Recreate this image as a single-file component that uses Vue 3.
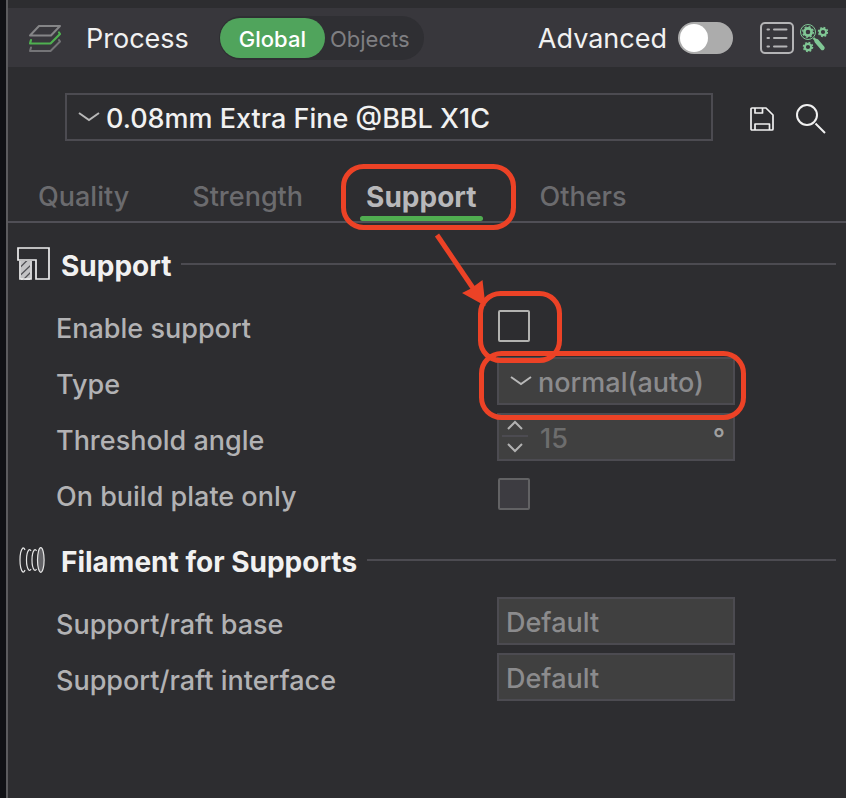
<script setup>
import { ref } from 'vue'

const scope = ref('Global')
const advanced = ref(false)
const tabs = ['Quality', 'Strength', 'Support', 'Others']
const activeTab = ref('Support')
const preset = ref('0.08mm Extra Fine @BBL X1C')
const enableSupport = ref(false)
const supportType = ref('normal(auto)')
const angle = ref('15')
const plateOnly = ref(false)
const filaments = [
  { id: 'raft-base', label: 'Support/raft base' },
  { id: 'raft-interface', label: 'Support/raft interface' }
]
</script>

<template>
  <div class="window">
    <main class="panel">
      <header class="header">
        <svg class="layers" width="34" height="30" viewBox="0 0 34 30" fill="none" stroke-width="2" stroke-linejoin="round" stroke-linecap="round">
          <path d="M11 3H32L23 12.500H2Z" stroke="#858587" />
          <path d="M3 17L2 20.500H22.500L32 11L31 9.500" stroke="#4fb050" stroke-width="2.200" />
          <path d="M3 24.500L2 28H22.500L32 18.500L31 17" stroke="#747477" />
        </svg>
        <h1 class="title">Process</h1>
        <div class="scope">
          <button
            v-for="s in ['Global', 'Objects']"
            :key="s"
            type="button"
            class="scope-btn"
            :class="{ on: scope === s }"
            @click="scope = s"
          >{{ s }}</button>
        </div>
        <label class="advanced" for="advanced">Advanced</label>
        <input id="advanced" v-model="advanced" class="switch" type="checkbox" />
        <button type="button" class="icon-btn list-btn" aria-label="Parameter list">
          <svg width="34" height="32" viewBox="0 0 34 32" fill="none" stroke="#b4b4b6" stroke-linecap="round">
            <rect x="1" y="1" width="32" height="30" rx="4" stroke-width="2" />
            <path d="M7.500 7.500H9M14 7.500H26.500M7.500 16H9M14 16H26.500M7.500 24.500H9M14 24.500H26.500" stroke-width="2" />
          </svg>
        </button>
        <button type="button" class="icon-btn" aria-label="Compare presets">
          <svg width="28" height="30" viewBox="0 0 28 30" fill="none" stroke="#80c795">
            <circle cx="8" cy="9" r="7.500" stroke-width="1" />
            <circle cx="8" cy="9" r="3.600" stroke-width="2.600" />
            <circle cx="8" cy="9" r="5.300" stroke-width="1.400" stroke-dasharray="2 2.160" />
            <path d="M13.500 15L16 17.500" stroke-width="2.400" />
            <path d="M16.500 18L22.500 25" stroke-width="4.400" stroke-linecap="round" />
            <circle cx="23" cy="9" r="3.200" stroke-width="2.200" />
            <circle cx="23" cy="9" r="4.600" stroke-width="1.400" stroke-dasharray="1.800 1.813" />
            <circle cx="8" cy="24" r="3.200" stroke-width="2.200" />
            <circle cx="8" cy="24" r="4.600" stroke-width="1.400" stroke-dasharray="1.800 1.813" />
          </svg>
        </button>
      </header>

      <div class="preset-row">
        <div class="field preset">
          <svg class="chevron" width="22" height="10" viewBox="0 0 22 10"><path d="M1 1L11 8L21 1" /></svg>
          <select v-model="preset" class="select" aria-label="Process preset">
            <option>0.08mm Extra Fine @BBL X1C</option>
          </select>
        </div>
        <button type="button" class="icon-btn tool" aria-label="Save preset">
          <svg width="24" height="24" viewBox="0 0 24 24" fill="none" stroke="#f0f0f0" stroke-width="1.700" stroke-linejoin="round">
            <path d="M2 1H16L23 8V22Q23 23 22 23H2Q1 23 1 22V2Q1 1 2 1Z" />
            <path d="M5 1V6H12.500V1M5 23V17H19.500V23" />
          </svg>
        </button>
        <button type="button" class="icon-btn tool search-btn" aria-label="Search">
          <svg width="30" height="30" viewBox="0 0 30 30" fill="none" stroke="#f0f0f0" stroke-width="2">
            <circle cx="11" cy="11" r="10" />
            <path d="M19.500 19.500L29 29" />
          </svg>
        </button>
      </div>

      <nav class="tabs">
        <button
          v-for="t in tabs"
          :key="t"
          type="button"
          class="tab"
          :class="{ active: activeTab === t }"
          @click="activeTab = t"
        >{{ t }}</button>
      </nav>

      <section class="group">
        <div class="heading">
          <svg width="34" height="34" viewBox="0 0 34 34" fill="none" stroke="#eeeeee" stroke-width="1.700">
            <path d="M4 14H13V33H4Z" fill="#c2c2c4" stroke="none" />
            <path d="M3 20.500L10 13.500M3 28.500L14 18M6 33L14 25" stroke="#505054" stroke-width="1.200" />
            <path d="M1 1H32V32H19V13H1Z" />
            <path d="M3 14V32H14V14" />
          </svg>
          <h2>Support</h2>
          <span class="rule"></span>
        </div>

        <div class="row">
          <label for="enable">Enable support</label>
          <input id="enable" v-model="enableSupport" class="check" type="checkbox" />
        </div>
        <div class="row">
          <label for="type">Type</label>
          <div class="field off">
            <svg class="chevron" width="22" height="10" viewBox="0 0 22 10"><path d="M1 1L11 8L21 1" /></svg>
            <select id="type" v-model="supportType" class="select" disabled>
              <option>normal(auto)</option>
            </select>
          </div>
        </div>
        <div class="row">
          <label for="angle">Threshold angle</label>
          <div class="field off spin">
            <div class="steps">
              <button type="button" disabled aria-label="Increase">
                <svg width="16" height="10" viewBox="0 0 16 10"><path d="M1 9L8 2L15 9" /></svg>
              </button>
              <button type="button" disabled aria-label="Decrease">
                <svg width="16" height="10" viewBox="0 0 16 10"><path d="M1 1L8 8L15 1" /></svg>
              </button>
            </div>
            <input id="angle" v-model="angle" type="text" class="number" disabled />
            <span class="unit">°</span>
          </div>
        </div>
        <div class="row">
          <label for="plate">On build plate only</label>
          <input id="plate" v-model="plateOnly" class="check" type="checkbox" disabled />
        </div>
      </section>

      <section class="group filament">
        <div class="heading">
          <svg width="34" height="34" viewBox="-1 0 34 34" fill="none" stroke="#e6e6e6" stroke-width="1.200">
            <path d="M7 7Q6 4.500 4.800 5C2.800 7 2 12 2 17S2.800 27 4.800 29Q6 29.500 7 27" />
            <path d="M13 8Q12 6 10.800 7C9 9 8.500 13 8.500 17S9 25 10.800 27Q12 28 13 26" />
            <path d="M18.500 8Q17.500 6 16.300 7C14.500 9 14 13 14 17S14.500 25 16.300 27Q17.500 28 18.500 26" />
            <ellipse cx="22.800" cy="17" rx="3.300" ry="12.300" fill="#626266" />
          </svg>
          <h2>Filament for Supports</h2>
          <span class="rule"></span>
        </div>
        <div v-for="f in filaments" :key="f.id" class="row">
          <label :for="f.id">{{ f.label }}</label>
          <div class="field off plain">
            <select :id="f.id" class="select" disabled>
              <option>Default</option>
            </select>
          </div>
        </div>
      </section>
    </main>

    <!-- Red call-outs drawn over the panel -->
    <svg class="callouts" width="846" height="798" viewBox="0 0 846 798" fill="none" stroke="#ec4226" stroke-width="5" aria-hidden="true">
      <rect x="343.500" y="166.500" width="170" height="61" rx="20" />
      <rect x="480.500" y="293.500" width="79" height="67" rx="20" />
      <rect x="481.500" y="353.500" width="262" height="64" rx="20" />
      <path d="M437 235L475 291" />
      <path d="M485.500 306L462 293L471 288.500L482.500 280Z" fill="#ec4226" stroke="none" />
    </svg>
  </div>
</template>

<style>
body {
  margin: 0;
  background: #2d2d30;
}
</style>

<style scoped>
.window {
  position: relative;
  box-sizing: border-box;
  min-height: 100vh;
  display: flex;
  background: #101115;
  padding-left: 6px;
  overflow: hidden;
  font-family: Inter, "Liberation Sans", sans-serif;
  font-size: 27px;
  font-weight: 500;
  line-height: 32px;
  color: #b2b2b4;
}
.panel {
  flex: 1;
  min-width: 0;
  border-left: 2px solid #5b5b5e;
  background: #2d2d30;
  padding-top: 8px;
}
button, input, select {
  font: inherit;
  color: inherit;
  margin: 0;
  padding: 0;
  border: 0;
  background: none;
  border-radius: 0;
  opacity: 1;
}
svg {
  display: block;
  flex: none;
}
.header {
  display: flex;
  align-items: center;
  height: 59px;
  padding: 0 18px 0 20px;
  background: #38373c;
}
.title {
  margin: 0 0 0 24px;
  padding-top: 2px;
  font-size: 27px;
  font-weight: 400;
  color: #f1f1f1;
}
.scope {
  display: flex;
  margin-left: 30px;
  padding: 2px 14px 2px 1px;
  border-radius: 22px;
  background: #2f2f33;
  font-size: 22px;
}
.scope-btn {
  height: 40px;
  padding: 2px 0 0 5px;
  color: #7f7f82;
  font-weight: 400;
}
.scope-btn.on {
  padding: 2px 19px 0;
  border-radius: 20px;
  background: #50a45c;
  color: #fff;
  font-weight: 500;
}
.advanced {
  margin-left: auto;
  padding-top: 2px;
  font-weight: 400;
  color: #f1f1f1;
}
.switch {
  appearance: none;
  display: flex;
  align-items: center;
  box-sizing: border-box;
  width: 55px;
  height: 32px;
  margin-left: 11px;
  padding: 2px;
  border-radius: 16px;
  background: #acacac;
}
.switch::before {
  content: "";
  width: 28px;
  height: 28px;
  border-radius: 50%;
  background: #fff;
}
.switch:checked {
  justify-content: flex-end;
  background: #50a45c;
}
.list-btn {
  margin: 0 6px 0 27px;
}
.preset-row {
  display: flex;
  align-items: center;
  padding: 26px 20px 0 57px;
}
.field {
  display: flex;
  align-items: center;
  box-sizing: border-box;
  height: 48px;
  border: 2px solid #4c4b51;
}
.preset {
  flex: 1;
  margin-right: 37px;
  padding-left: 11px;
  color: #f1f1f1;
}
.tool {
  padding-top: 3px;
}
.search-btn {
  margin-left: 22px;
}
.chevron {
  fill: none;
  stroke: #b8b8b8;
  stroke-width: 2;
}
.select {
  appearance: none;
  flex: 1;
  min-width: 0;
  height: 44px;
  padding: 4px 0 0 6px;
}
.select:disabled {
  opacity: 1;
}
.tabs {
  display: flex;
  gap: 51px;
  margin-top: 31px;
  padding-left: 24px;
  border-bottom: 2px solid #504f56;
}
.tab {
  height: 49px;
  padding: 5px 6px 0;
  border-bottom: 5px solid transparent;
  color: #6b6b6e;
}
.tab.active {
  position: relative;
  font-size: 28px;
  font-weight: 700;
  color: #b8b8ba;
}
.tab.active::after {
  content: "";
  position: absolute;
  left: 0;
  right: 0;
  bottom: -5px;
  height: 5px;
  border-radius: 3px;
  background: #50ad50;
}
.group {
  padding: 16px 10px 0 9px;
}
.filament {
  padding-top: 14px;
}
.heading {
  display: flex;
  align-items: center;
  height: 50px;
  margin-bottom: 8px;
}
.heading h2 {
  margin: 4px 10px 0;
  font-size: 28px;
  font-weight: 700;
  color: #f1f1f1;
}
.rule {
  flex: 1;
  height: 2px;
  background: #4c4b51;
}
.row {
  display: grid;
  grid-template-columns: 441px 238px;
  align-items: center;
  height: 56px;
  padding-left: 39px;
}
.row label {
  padding-top: 7px;
}
.off {
  padding-left: 11px;
  background: #404040;
  color: #8b8b8d;
}
.plain {
  padding-left: 1px;
}
.spin {
  padding: 0 8px 0 3px;
}
.steps {
  display: flex;
  flex-direction: column;
  width: 26px;
}
.steps button {
  display: flex;
  align-items: center;
  justify-content: center;
  height: 20px;
}
.steps button + button {
  box-sizing: border-box;
  height: 24px;
  border-top: 2px solid #4c4b51;
}
.steps svg {
  fill: none;
  stroke: #b2b2b2;
  stroke-width: 2;
}
.number {
  flex: 1;
  min-width: 0;
  padding: 4px 0 0 12px;
  color: #6d6d6d;
}
.unit {
  padding-top: 4px;
  color: #a0a0a0;
}
.check {
  appearance: none;
  box-sizing: border-box;
  width: 32px;
  height: 32px;
  margin: 2px 0 0 1px;
  border: 2px solid #b2b2b0;
  border-radius: 2px;
}
.check:checked {
  background: #50a45c;
}
.check:disabled {
  border-color: #626264;
  background: #3d3c41;
}
.callouts {
  position: absolute;
  top: 0;
  left: 0;
  pointer-events: none;
}
</style>
